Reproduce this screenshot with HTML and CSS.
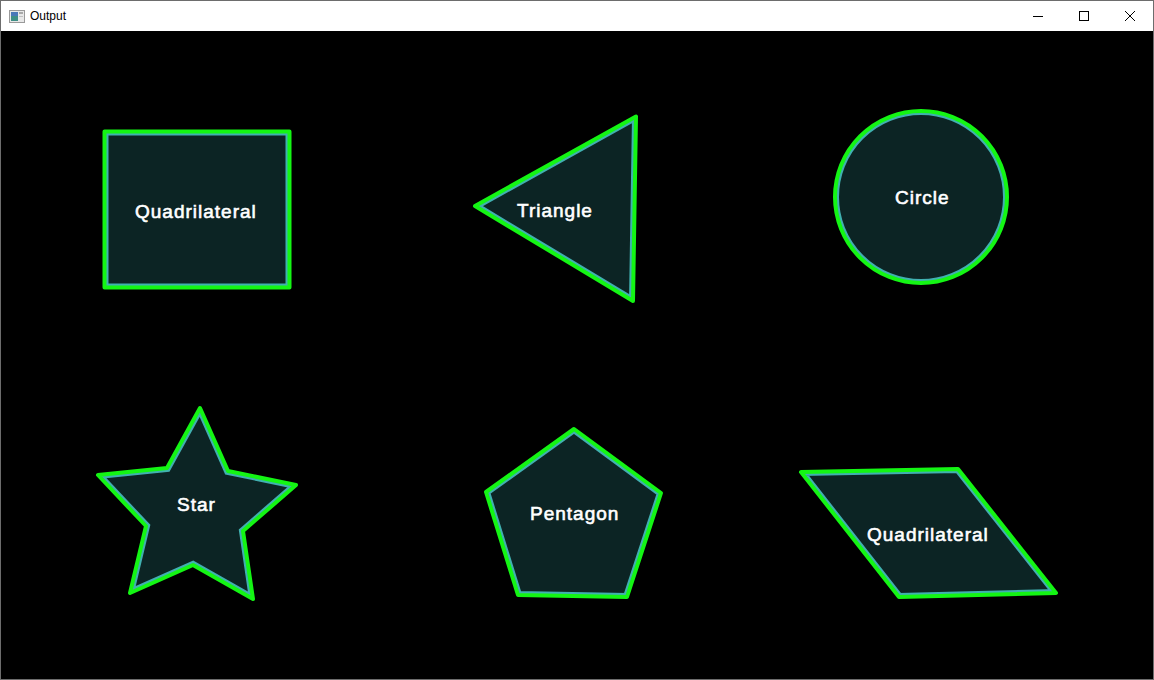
FILE: index.html
```html
<!DOCTYPE html>
<html>
<head>
<meta charset="utf-8">
<title>Output</title>
<link rel="stylesheet" href="styles.css">
</head>
<body>
<div class="window">
  <div class="titlebar">
    <div class="title">
      <svg class="app-icon" width="16" height="13" viewBox="0 0 16 13">
        <rect x="0.5" y="0.5" width="15" height="12" fill="#e8e8e8" stroke="#9a9a9a"/>
        <rect x="2" y="2" width="7" height="9" fill="#3f8f86"/>
        <rect x="2" y="2" width="7" height="4" fill="#4a78b8"/>
        <rect x="10" y="2" width="4" height="2" fill="#a8a8a8"/>
        <rect x="10" y="6" width="4" height="1" fill="#c0c0c0"/>
      </svg>
      <span class="title-text">Output</span>
    </div>
    <div class="controls">
      <div class="ctrl">
        <svg width="12" height="12" viewBox="0 0 12 12"><path d="M1 6.5H11" stroke="#000" stroke-width="1" fill="none"/></svg>
      </div>
      <div class="ctrl">
        <svg width="12" height="12" viewBox="0 0 12 12"><rect x="1.5" y="1.5" width="9" height="9" stroke="#000" stroke-width="1" fill="none"/></svg>
      </div>
      <div class="ctrl">
        <svg width="12" height="12" viewBox="0 0 12 12"><path d="M1 1L11 11M11 1L1 11" stroke="#000" stroke-width="1" fill="none"/></svg>
      </div>
    </div>
  </div>
  <div class="canvas">
    <svg class="board" width="1152" height="648" viewBox="1 31 1152 648">
      <defs>
        <polygon id="p1" points="104.5,131.5 289.5,131.5 289.5,287.5 104.5,287.5"/>
        <polygon id="p2" points="475,206 636,116.5 633,301"/>
        <circle id="p3" cx="921" cy="197" r="86"/>
        <polygon id="p4" points="200,408 228,471 296,485 243,531 253,599 193,565 130,593 146,526 98,475 167,468"/>
        <polygon id="p5" points="574,429 661,493 627,597 518,595 486,492"/>
        <polygon id="p6" points="801,472 958,469 1056,593 899,597"/>
        <clipPath id="c1"><use href="#p1"/></clipPath>
        <clipPath id="c2"><use href="#p2"/></clipPath>
        <clipPath id="c3"><use href="#p3"/></clipPath>
        <clipPath id="c4"><use href="#p4"/></clipPath>
        <clipPath id="c5"><use href="#p5"/></clipPath>
        <clipPath id="c6"><use href="#p6"/></clipPath>
      </defs>
      <g class="shape">
        <use href="#p1" class="inner" clip-path="url(#c1)"/>
        <use href="#p1" class="outline"/>
      </g>
      <g class="shape">
        <use href="#p2" class="inner" clip-path="url(#c2)"/>
        <use href="#p2" class="outline"/>
      </g>
      <g class="shape">
        <use href="#p3" class="inner" clip-path="url(#c3)"/>
        <use href="#p3" class="outline"/>
      </g>
      <g class="shape">
        <use href="#p4" class="inner" clip-path="url(#c4)"/>
        <use href="#p4" class="outline"/>
      </g>
      <g class="shape">
        <use href="#p5" class="inner" clip-path="url(#c5)"/>
        <use href="#p5" class="outline"/>
      </g>
      <g class="shape">
        <use href="#p6" class="inner" clip-path="url(#c6)"/>
        <use href="#p6" class="outline"/>
      </g>
      <text class="label" x="135" y="218">Quadrilateral</text>
      <text class="label" x="517" y="217">Triangle</text>
      <text class="label" x="895" y="204">Circle</text>
      <text class="label" x="177" y="511">Star</text>
      <text class="label" x="530" y="520">Pentagon</text>
      <text class="label" x="867" y="541">Quadrilateral</text>
    </svg>
  </div>
</div>
</body>
</html>
```
FILE: styles.css
```css
html, body {
  margin: 0;
  padding: 0;
  background: #000;
}
.window {
  width: 1154px;
  height: 680px;
  box-sizing: border-box;
  border: 1px solid #6d6d6d;
  display: flex;
  flex-direction: column;
  overflow: hidden;
}
.titlebar {
  height: 30px;
  flex: none;
  background: #fff;
  display: flex;
  align-items: stretch;
  justify-content: space-between;
}
.title {
  display: flex;
  align-items: center;
  gap: 5px;
  padding-left: 8px;
}
.app-icon {
  display: block;
}
.title-text {
  font-family: "Liberation Sans", Arial, sans-serif;
  font-size: 12px;
  color: #000;
}
.controls {
  display: flex;
}
.ctrl {
  width: 46px;
  display: flex;
  align-items: center;
  justify-content: center;
}
.ctrl svg {
  display: block;
  shape-rendering: crispEdges;
}
.canvas {
  flex: 1;
  background: #000;
}
.board {
  display: block;
}
.inner {
  fill: #0c2424;
  stroke: #40b0b0;
  stroke-width: 8;
  stroke-linejoin: miter;
}
.outline {
  fill: none;
  stroke: #14f514;
  stroke-width: 4;
  stroke-linejoin: round;
}
.label {
  font-family: "Liberation Sans", Arial, sans-serif;
  font-size: 19px;
  letter-spacing: 1px;
  fill: #fff;
  stroke: #fff;
  stroke-width: 0.6;
}
```
